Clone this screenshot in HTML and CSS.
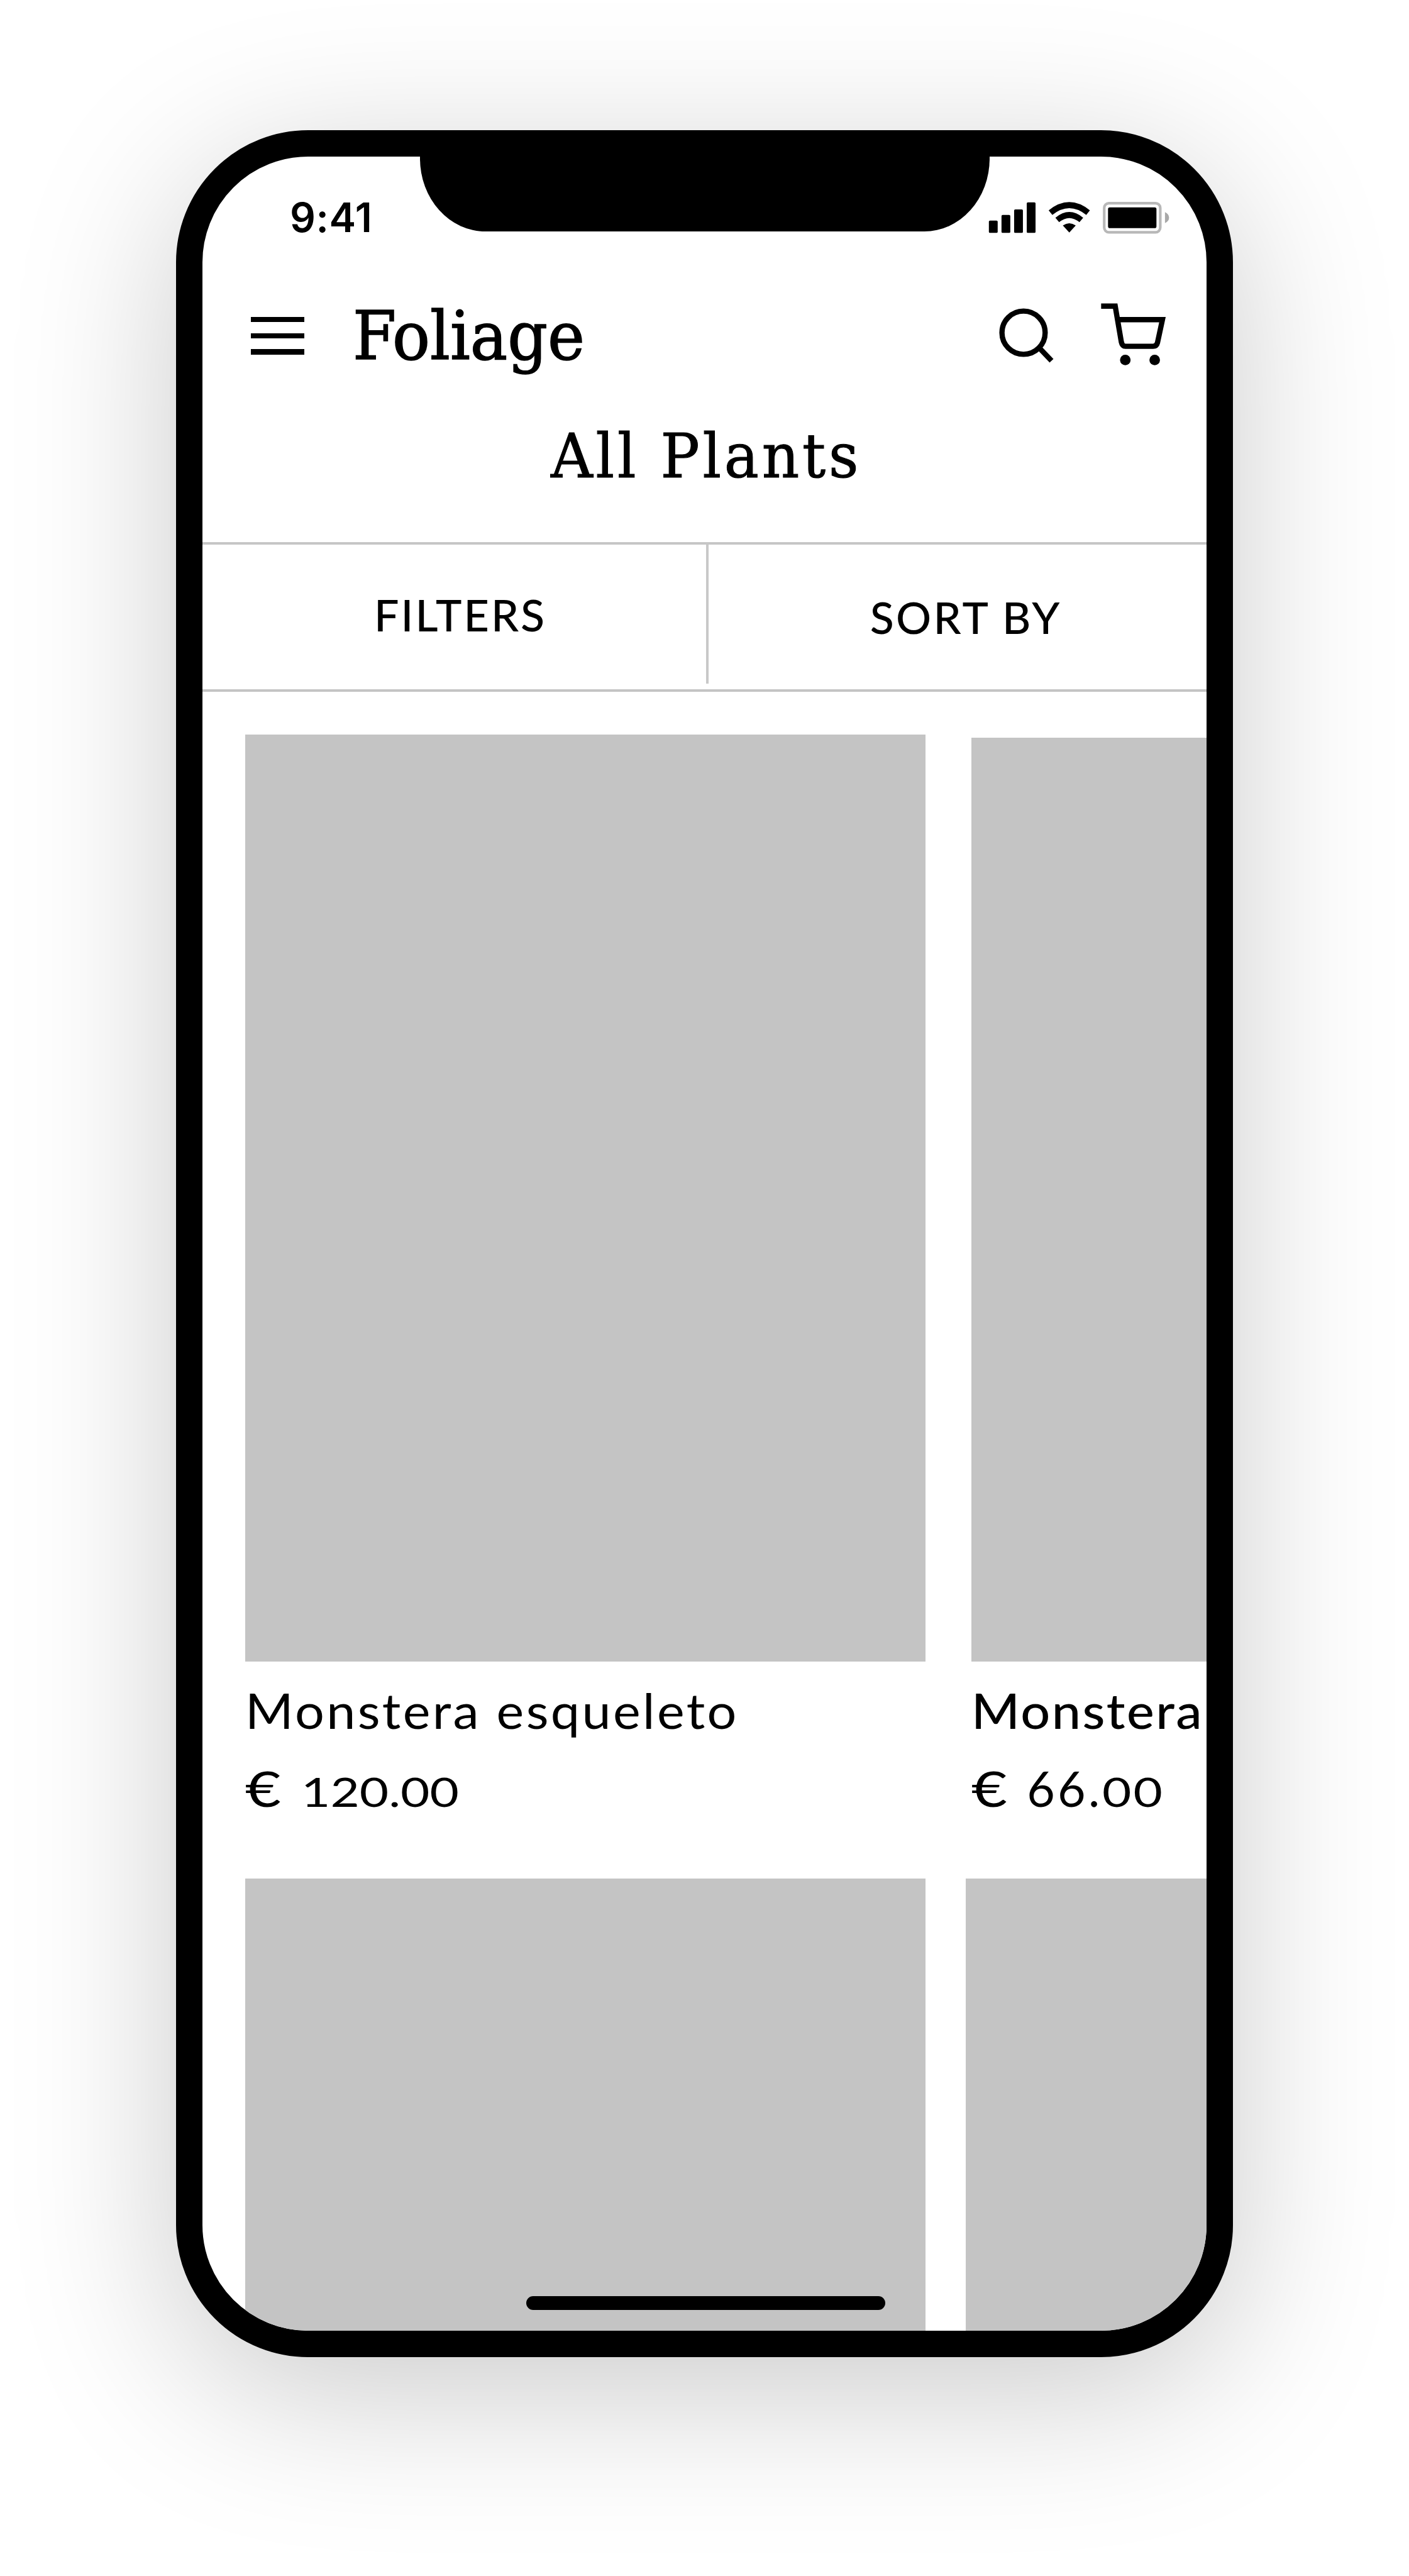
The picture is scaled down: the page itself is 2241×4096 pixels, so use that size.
FILE: index.html
```html
<!DOCTYPE html>
<html lang="en">
<head>
<meta charset="utf-8">
<title>Foliage – All Plants</title>
<link rel="stylesheet" href="styles.css">
</head>
<body>
<main class="phone">
  <div class="notch"></div>
  <div class="status">
    <span class="clock">9:41</span>
    <svg class="status-icons" viewBox="1680 340 316 62">
      <rect x="1683" y="376" width="15" height="21" rx="2"/>
      <rect x="1704.500" y="366.500" width="15" height="30.500" rx="2"/>
      <rect x="1726" y="357" width="15" height="40" rx="2"/>
      <rect x="1747.500" y="345" width="15" height="52" rx="2"/>
      <g fill="none" stroke="#000" stroke-width="10">
        <path d="M1788 362.500Q1820 337 1852 362.500"/>
        <path d="M1799.500 375Q1820 358 1840.500 375"/>
      </g>
      <path d="M1809 384.500Q1820 377 1831 384.500L1820 396.500Z"/>
      <rect x="1879.500" y="346.500" width="95.500" height="49.500" rx="8" fill="none" stroke="#b8b8b8" stroke-width="4.500"/>
      <rect x="1886" y="353.500" width="82.500" height="35.500" rx="3"/>
      <path d="M1983 361.500Q1990 365 1990 371T1983 380.500Z" fill="#a8a8a8"/>
    </svg>
  </div>
  <header class="topbar">
    <div class="menu"><i></i><i></i><i></i></div>
    <span class="brand">Foliage</span>
    <svg class="tools" viewBox="1690 510 300 120" fill="none" stroke="#000" stroke-width="9">
      <circle cx="1740.300" cy="566.800" r="36.800"/>
      <path d="M1766 591.500L1788 614.500"/>
      <path d="M1872.500 521.500H1896.500L1907 583Q1908.500 590 1914 590H1961Q1967 590 1968.500 584L1977 544.500H1901"/>
      <circle cx="1913.700" cy="613.300" r="9" fill="#000" stroke="none"/>
      <circle cx="1963.800" cy="613.300" r="9" fill="#000" stroke="none"/>
    </svg>
  </header>
  <h1 class="title">All Plants</h1>
  <nav class="bar">
    <div class="cell filters"><span>FILTERS</span></div>
    <div class="rule"></div>
    <div class="cell sort"><span>SORT BY</span></div>
  </nav>
  <section class="row">
    <article class="card">
      <div class="photo"></div>
      <p class="name">Monstera esqueleto</p>
      <p class="price"><span class="euro">€</span> <span class="small">120.00</span></p>
    </article>
    <article class="card second">
      <div class="photo"></div>
      <p class="name">Monstera</p>
      <p class="price"><span class="euro">€</span> <span class="large">66.</span><span class="small">00</span></p>
    </article>
  </section>
  <section class="row next">
    <div class="photo"></div>
    <div class="photo"></div>
  </section>
  <div class="home"></div>
</main>
</body>
</html>
```
FILE: styles.css
```css
* { box-sizing: border-box; margin: 0; padding: 0; }
html, body { width: 2241px; height: 4096px; overflow: hidden; background: #fff; }
body { padding: 206.700px 0 0 280px; color: #000; }
.phone {
  position: relative;
  display: flex;
  flex-direction: column;
  width: 1681px;
  height: 3541.500px;
  border: 42px solid #000;
  border-radius: 210px;
  background: #fff;
  overflow: hidden;
  box-shadow: 0 55px 262px rgba(0, 0, 0, .213);
}
.notch {
  position: absolute;
  top: -2px;
  left: 345.500px;
  width: 906px;
  height: 121px;
  background: #000;
  border-radius: 0 0 104px 104px / 0 0 116px 116px;
}
.status { display: flex; flex: none; justify-content: space-between; height: 219px; padding: 68px 54px 0 139px; }
.clock { margin-top: -3px; font: 600 64px/64px Inter, sans-serif; letter-spacing: .6px; }
.status-icons { width: 295px; height: 58px; }
.topbar { display: flex; flex: none; height: 155px; padding-left: 76.500px; }
.menu { display: flex; flex-direction: column; flex: none; gap: 17.500px; width: 85.500px; padding-top: 36px; }
.menu i { height: 8.400px; background: #000; }
.brand { width: 900px; padding: 2.500px 0 0 77px; font: 105.800px/130px "DejaVu Serif Condensed", "DejaVu Serif", serif; font-stretch: condensed; transform: scaleX(1.047); transform-origin: 77px 0; -webkit-text-stroke: 1.500px #000; }
.tools { flex: none; width: 280px; height: 112px; margin: 8.600px 58.500px 0 auto; }
.title { flex: none; height: 239px; padding: 48px 0 0 554px; font: 400 97px/110px "DejaVu Serif Condensed", "DejaVu Serif", serif; font-stretch: condensed; letter-spacing: 4.500px; white-space: nowrap; transform: scaleX(1.060); transform-origin: 554px 0; -webkit-text-stroke: 1px #000; }
.bar { display: flex; flex: none; height: 238.400px; border-top: 4.200px solid #c6c6c6; border-bottom: 4.200px solid #c4c4c4; font: 500 70px/84px Lato, sans-serif; letter-spacing: 3px; }
.cell { flex: none; width: 800.500px; padding-top: 69px; }
.filters { padding-left: 273px; }
.sort { padding: 73px 0 0 257px; letter-spacing: 3.300px; }
.rule { flex: none; width: 4.200px; height: 221px; background: #c8c8c8; }
.row { display: flex; flex: none; gap: 72.500px; height: 1886.600px; padding: 68px 0 0 68px; }
.card { flex: none; width: 1082px; }
.photo { flex: none; width: 1082px; height: 1473.500px; background: #c4c4c4; }
.second { padding-top: 4.500px; }
.second .photo { height: 1469px; }
.name, .price { font: 77px/92px Lato, sans-serif; white-space: nowrap; }
.name { margin-top: 31px; font-size: 78px; letter-spacing: 3.200px; transform: scaleX(1.060); transform-origin: 0 0; }
.price { margin-top: 32px; }
.second .name { font-weight: 500; letter-spacing: 2.300px; }
.euro { display: inline-block; width: 69px; transform: scaleX(1.280); transform-origin: 0 50%; }
.large { letter-spacing: 4.200px; }
.small { display: inline-block; font-size: 64px; transform: scaleX(1.250); transform-origin: 0 50%; }
.large + .small { letter-spacing: 2.500px; }
.next { height: 1000px; padding-top: 0; gap: 64px; }
.home { position: absolute; left: 515px; bottom: 33px; width: 571px; height: 22px; border-radius: 11px; background: #000; }
```
